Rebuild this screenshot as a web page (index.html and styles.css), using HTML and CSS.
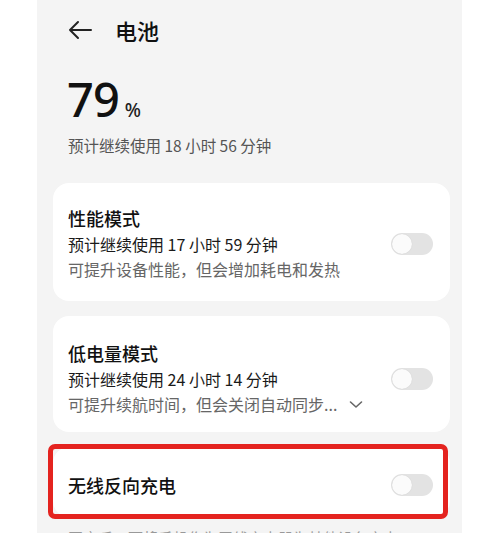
FILE: index.html
```html
<!DOCTYPE html>
<html lang="zh-CN">
<head>
<meta charset="utf-8">
<title>电池</title>
<link rel="stylesheet" href="styles.css">
</head>
<body>
<div class="screen">
  <header class="topbar">
    <svg class="back" width="26" height="20" viewBox="0 0 26 20" aria-hidden="true">
      <path d="M24 10H3M11 2L3 10l8 8" fill="none" stroke="#222" stroke-width="2" stroke-linecap="round" stroke-linejoin="round"/>
    </svg>
    <h1 class="title">电池</h1>
  </header>

  <div class="level">
    <span class="num">79</span><span class="pct">%</span>
  </div>
  <p class="remain">预计继续使用 18 小时 56 分钟</p>

  <section class="card">
    <div class="info">
      <div class="name">性能模式</div>
      <div class="est">预计继续使用 17 小时 59 分钟</div>
      <div class="desc">可提升设备性能，但会增加耗电和发热</div>
    </div>
    <div class="toggle"><span class="knob"></span></div>
  </section>

  <section class="card card-low">
    <div class="info">
      <div class="name">低电量模式</div>
      <div class="est">预计继续使用 24 小时 14 分钟</div>
      <div class="desc">可提升续航时间，但会关闭自动同步...
        <svg class="chev" width="14" height="9" viewBox="0 0 14 9" aria-hidden="true">
          <path d="M1.5 2l5.5 5 5.5-5" fill="none" stroke="#666" stroke-width="1.6" stroke-linecap="round" stroke-linejoin="round"/>
        </svg>
      </div>
    </div>
    <div class="toggle"><span class="knob"></span></div>
  </section>

  <section class="card card-wireless">
    <div class="info">
      <div class="name">无线反向充电</div>
    </div>
    <div class="toggle"><span class="knob"></span></div>
    <div class="highlight"></div>
  </section>

  <p class="foot">开启后，可将手机作为无线充电器为其他设备充电</p>
</div>
</body>
</html>
```

FILE: styles.css
```css
html, body {
  margin: 0;
  padding: 0;
}
body {
  background: #ffffff;
  width: 500px;
  height: 533px;
  overflow: hidden;
  font-family: "Noto Sans CJK SC", "Noto Sans", sans-serif;
  color: #111;
}
.screen {
  margin-left: 37px;
  width: 425px;
  height: 533px;
  background: #f4f4f4;
  padding: 15px 12px 0 16px;
  box-sizing: border-box;
}
.topbar {
  display: flex;
  align-items: center;
  height: 30px;
  padding-left: 14px;
}
.back {
  display: block;
  margin-right: 22px;
}
.title {
  margin: 0;
  font-size: 22px;
  font-weight: 500;
  line-height: 30px;
  color: #111;
}
.level {
  margin-top: 30px;
  padding-left: 14px;
  height: 48px;
  display: flex;
  align-items: baseline;
}
.num {
  font-family: "Noto Sans", sans-serif;
  font-size: 47px;
  font-weight: 500;
  line-height: 48px;
  letter-spacing: -1px;
  color: #111;
}
.pct {
  font-family: "Noto Sans", sans-serif;
  font-size: 19px;
  font-weight: 500;
  margin-left: 6px;
  color: #222;
}
.remain {
  margin: 10px 0 0;
  padding-left: 15px;
  font-size: 15.5px;
  line-height: 24px;
  color: #555;
}
.card {
  position: relative;
  margin-top: 15px;
  background: #fff;
  border-radius: 16px;
  display: flex;
  align-items: center;
  justify-content: space-between;
  padding: 22px 17px 19px 15px;
}
.remain + .card {
  margin-top: 26px;
}
.card-low {
  padding-top: 24px;
  padding-bottom: 15px;
}
.card-wireless {
  padding-top: 25px;
  padding-bottom: 19px;
}
.info {
  display: flex;
  flex-direction: column;
}
.name {
  font-size: 18px;
  line-height: 26px;
  font-weight: 500;
  color: #111;
}
.est {
  font-size: 16px;
  line-height: 26px;
  color: #1a1a1a;
}
.desc {
  font-size: 16px;
  line-height: 25px;
  color: #666;
  display: flex;
  align-items: center;
}
.chev {
  margin-left: 12px;
}
.toggle {
  position: relative;
  width: 42px;
  height: 22px;
  border-radius: 11px;
  background: #e3e3e3;
  flex: none;
}
.knob {
  position: absolute;
  left: 1px;
  top: 1px;
  width: 20px;
  height: 20px;
  border-radius: 50%;
  background: #fbfbfb;
  box-shadow: 0 0 1px rgba(0, 0, 0, 0.15);
}
.highlight {
  position: absolute;
  left: -5px;
  right: 2px;
  top: -3px;
  bottom: -2px;
  border: 5px solid #e4231f;
  border-radius: 7px;
  pointer-events: none;
}
.foot {
  margin: 10px 0 0;
  padding-left: 15px;
  font-size: 15px;
  line-height: 22px;
  color: #999;
}
```
